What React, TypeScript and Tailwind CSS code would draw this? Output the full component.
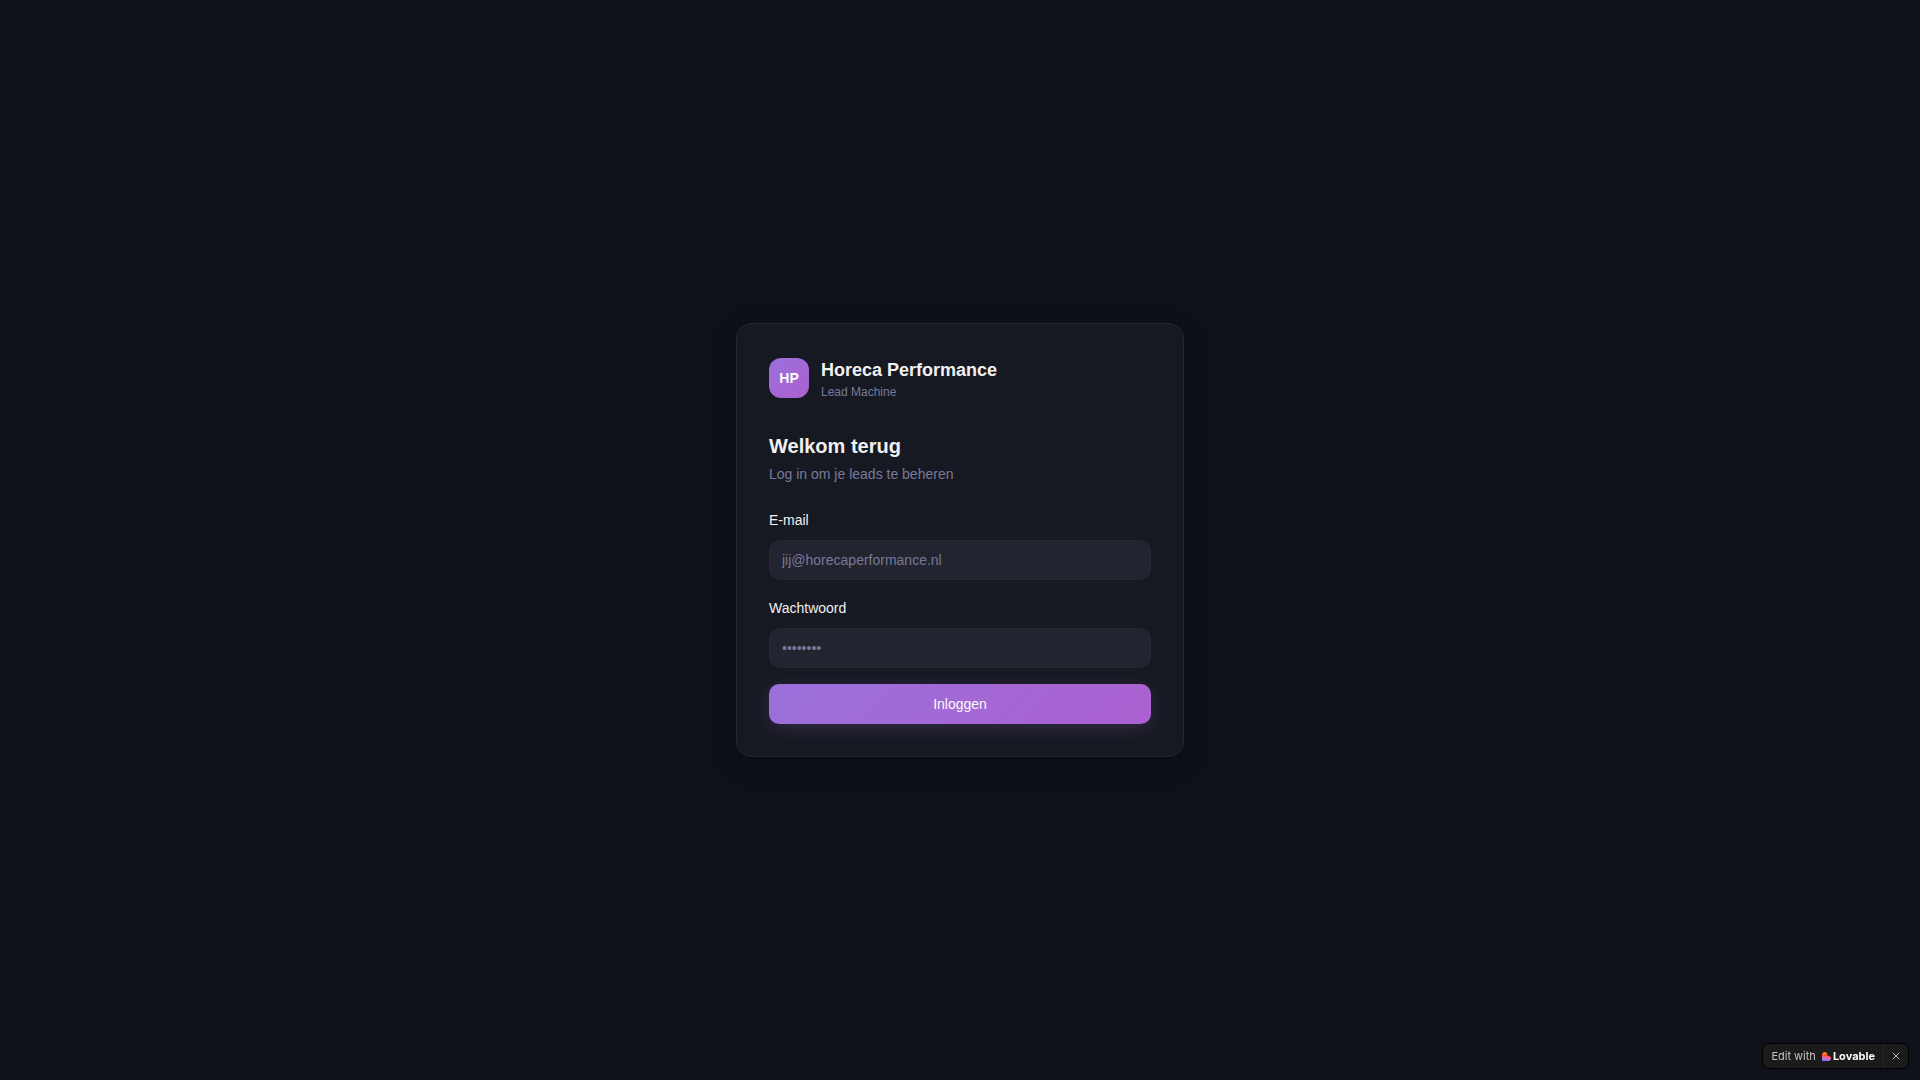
import { useState } from 'react';
import type { InputHTMLAttributes } from 'react';
import { X } from 'lucide-react';

type FieldProps = InputHTMLAttributes<HTMLInputElement> & { id: string; label: string };

function Field({ id, label, ...props }: FieldProps) {
  return (
    <div className="space-y-2">
      <label htmlFor={id} className="block text-sm/6 font-medium">
        {label}
      </label>
      <input
        id={id}
        className="block h-10 w-full rounded-[10px] border border-[#252732] bg-[#22242f] px-3 text-sm text-[#f0f0f0] placeholder:text-[#78799a] focus:outline-none focus:ring-2 focus:ring-[#9a70db]"
        {...props}
      />
    </div>
  );
}

function LovableHeart() {
  return (
    <svg viewBox="0 0 18 18" className="size-[9px]" aria-hidden="true">
      <defs>
        <linearGradient id="heart" x1="0.6" y1="0" x2="0.4" y2="1">
          <stop offset="0.1" stopColor="#ff8a1a" />
          <stop offset="0.4" stopColor="#ff4f2c" />
          <stop offset="0.65" stopColor="#f266b0" />
          <stop offset="1" stopColor="#5a78ff" />
        </linearGradient>
      </defs>
      <path
        fill="url(#heart)"
        d="M5.4 0c3 0 5.4 2.4 5.4 5.4v2.1h1.800c3 0 5.400 2.400 5.400 5.300S15.600 18 12.600 18H0V5.400C0 2.400 2.400 0 5.400 0z"
      />
    </svg>
  );
}

function EditBadge() {
  const [open, setOpen] = useState(true);

  if (!open) return null;

  return (
    <div className="fixed right-3 bottom-3 flex h-6 items-center rounded-md bg-[#1b1b1b] font-[Inter,sans-serif] text-[11px] text-[#c5c1ba] ring-1 ring-black">
      <a href="#edit" className="flex h-full items-center px-2">
        Edit with
        <span className="ml-1.5 flex items-center gap-0.5 font-bold text-[#fcfbf8]">
          <LovableHeart />
          Lovable
        </span>
      </a>
      <button
        type="button"
        aria-label="Close"
        onClick={() => setOpen(false)}
        className="flex h-full w-[25px] items-center justify-center border-l border-[#272727]"
      >
        <X className="size-3" strokeWidth={2} />
      </button>
    </div>
  );
}

export default function App() {
  return (
    <div className="flex min-h-screen items-center justify-center bg-[#0e1118] p-4 font-['Liberation_Sans',Arial,sans-serif] text-[#f0f0f0]">
      <main className="w-full max-w-md rounded-2xl border border-[#252732] bg-[#171922] p-8 shadow-[0_8px_32px_-8px_rgba(0,0,0,0.4)]">
        <div className="mb-8 flex items-center gap-3">
          <div className="flex size-10 items-center justify-center rounded-xl bg-linear-135 from-[#9a70db] to-[#ab60d0] text-sm font-bold text-[#fafafa]">
            HP
          </div>
          <div>
            <p className="text-lg/7 font-semibold">Horeca Performance</p>
            <p className="text-xs text-[#78799a]">Lead Machine</p>
          </div>
        </div>

        <h1 className="text-xl font-semibold">Welkom terug</h1>
        <p className="mt-1 mb-6 text-sm text-[#78799a]">Log in om je leads te beheren</p>

        <form className="space-y-4" onSubmit={(e) => e.preventDefault()}>
          <Field id="email" label="E-mail" type="email" placeholder="jij@horecaperformance.nl" />
          <Field id="password" label="Wachtwoord" type="password" placeholder="••••••••" />
          <button
            type="submit"
            className="h-10 w-full rounded-[10px] bg-linear-135 from-[#9a70db] to-[#ab60d0] text-sm font-medium text-[#fafafa] shadow-[0_4px_20px_-4px_rgba(154,112,219,0.3)]"
          >
            Inloggen
          </button>
        </form>
      </main>

      <EditBadge />
    </div>
  );
}
